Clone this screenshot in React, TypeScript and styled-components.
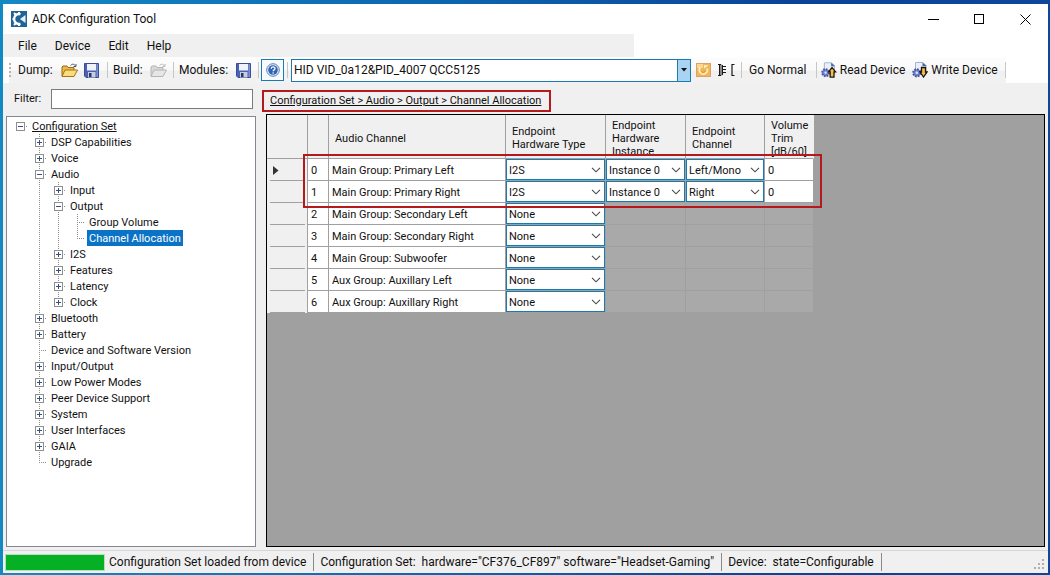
import React from 'react';
import styled, { createGlobalStyle, css } from 'styled-components';

const ui = 'Roboto, "Open Sans", sans-serif';
const classic = 'Roboto, "Liberation Sans", sans-serif';
const blue = '#1b7ab0';
const red = '#b3191d';

const Global = createGlobalStyle`
  *, *::before, *::after { box-sizing: border-box; }
  html, body { height: 100%; }
  body { margin: 0; background: #f0f0f0; color: #111; font: 11px/16px ${classic}; }
  #root { height: 100%; }
  button, input, select { font: inherit; color: inherit; margin: 0; padding: 0; border: 0; border-radius: 0; background: none; }
  a { color: inherit; }
`;

/* ---------- window frame ---------- */

const Desktop = styled.div`
  min-height: 100%;
  display: flex;
  padding: 4px 2px 2px 3px;
  background: linear-gradient(90deg, #1389c4 0%, #0d63ae 45%, #0b4496 75%, #0d469b 100%);
`;

const Window = styled.div`
  flex: 1;
  min-width: 0;
  display: flex;
  flex-direction: column;
  background: #f0f0f0;
`;

const TitleBar = styled.header`
  display: flex;
  align-items: center;
  height: 30px;
  padding-left: 8px;
  background: #fff;
  font: 12px/16px ${ui};
`;

const AppTitle = styled.h1`
  flex: 1;
  margin: 0 0 0 5px;
  font: inherit;
`;

const CaptionButton = styled.button`
  display: grid;
  place-items: center;
  width: 46px;
  height: 30px;
`;

const MenuBar = styled.nav`
  display: flex;
  align-items: center;
  height: 23px;
  padding-left: 9px;
  background: linear-gradient(90deg, #f0f0f0 631px, #fff 631px);
  font: 12px/16px ${ui};
`;

const MenuItem = styled.button`
  padding: 0 6px;
  margin-right: 6px;
`;

const ToolBar = styled.div`
  display: flex;
  align-items: center;
  height: 26px;
  padding-left: 6px;
  background: #fff;
  font: 12px/16px ${ui};
  white-space: nowrap;
`;

const ToolStrip = styled.div`
  display: flex;
  align-items: center;
  height: 26px;
  background: linear-gradient(#fdfdfd, #f9f9f9 50%, #f0f0f0 55%, #f2f2f2);
`;

const Grip = styled.span`
  width: 2px;
  height: 14px;
  margin-right: 7px;
  background: repeating-linear-gradient(#b4b4b4 0 2px, transparent 2px 4px);
`;

const ToolLabel = styled.span<{ $w: number }>`
  width: ${p => p.$w}px;
`;

const ToolButton = styled.button<{ $w?: number; $active?: boolean }>`
  display: flex;
  align-items: center;
  justify-content: center;
  gap: 3px;
  width: ${p => (p.$w ? `${p.$w}px` : 'auto')};
  height: 22px;
  ${p => p.$active && css`border: 1px solid ${blue}; background: #f7fafd;`}
`;

const Separator = styled.span<{ $l?: number; $r?: number }>`
  width: 1px;
  height: 16px;
  margin: 0 ${p => p.$r ?? 5}px 0 ${p => p.$l ?? 5}px;
  background: #c4c8cc;
`;

const DeviceCombo = styled.label`
  display: grid;
  grid-template-columns: 1fr 13px;
  width: 400px;
  height: 23px;
  margin: 0 3px;
  border: 1px solid ${blue};
  background: #fff;

  select {
    grid-area: 1 / 1 / 2 / 3;
    appearance: none;
    padding-left: 2px;
    outline: 0;
  }

  span {
    grid-area: 1 / 2 / 2 / 3;
    display: grid;
    place-items: center;
    border-left: 1px solid ${blue};
    background: #a9d3f3;
    pointer-events: none;
  }
`;

/* ---------- body ---------- */

const Body = styled.main`
  flex: 1;
  display: grid;
  grid-template-columns: 250px minmax(0, 1fr);
  grid-template-rows: 31px 1fr;
  column-gap: 10px;
  padding: 0 3px 3px;
`;

const FilterRow = styled.div`
  display: flex;
  align-items: center;
  padding: 1px 3px 0 8px;

  label { width: 37px; }

  input {
    flex: 1;
    min-width: 0;
    height: 20px;
    padding: 0 3px;
    border: 1px solid #7a7a7a;
    background: #fff;
  }
`;

const CrumbRow = styled.div`
  display: flex;
  align-items: center;
  padding-top: 4px;
  margin-left: -4px;
`;

const Crumbs = styled.nav`
  padding: 0 8px 0 6px;
  border: 2px solid ${red};
  line-height: 18px;
  white-space: nowrap;
`;

const TreePanel = styled.ul`
  margin: 2px 0 0;
  padding: 1px 4px;
  list-style: none;
  border: 1px solid #828790;
  background: #fff;
`;

const TreeRow = styled.li`
  display: flex;
  height: 16px;
`;

const dotsV = 'repeating-linear-gradient(#8c8c8c 0 1px, transparent 1px 2px)';
const dotsH = 'repeating-linear-gradient(90deg, #8c8c8c 0 1px, transparent 1px 2px)';

const Guide = styled.span<{ $line?: boolean }>`
  width: 19px;
  background: ${p => (p.$line ? `${dotsV} 9px 0 / 1px 100% no-repeat` : 'none')};
`;

const NodeCell = styled.span<{ $up: boolean; $down: boolean }>`
  display: flex;
  align-items: center;
  width: 19px;
  padding-left: 5px;
  background:
    ${p => (p.$up ? `${dotsV} 9px 0 / 1px 8px no-repeat,` : '')}
    ${p => (p.$down ? `${dotsV} 9px 8px / 1px 8px no-repeat,` : '')}
    ${dotsH} 9px 8px / 8px 1px no-repeat;
`;

const Toggle = styled.button<{ $open?: boolean }>`
  width: 9px;
  height: 9px;
  margin-top: 1px;
  border: 1px solid #8e8f8f;
  background:
    linear-gradient(#3b4f81, #3b4f81) center / 5px 1px no-repeat,
    ${p => (p.$open ? '' : 'linear-gradient(#3b4f81, #3b4f81) center / 1px 5px no-repeat,')}
    #fff;
`;

const NodeLabel = styled.button<{ $root?: boolean; $selected?: boolean }>`
  height: 16px;
  padding: 2px 2px 0;
  line-height: 14px;
  white-space: nowrap;
  text-decoration: ${p => (p.$root ? 'underline' : 'none')};
  ${p => p.$selected && css`background: #0b73c6; color: #fff;`}
`;

const GridPanel = styled.section`
  position: relative;
  border: 1px solid #000;
  background: #a0a0a0;
  overflow: hidden;
`;

const Table = styled.table`
  width: 547px;
  table-layout: fixed;
  border-collapse: separate;
  border-spacing: 0;
  line-height: 13px;
`;

const HeadCell = styled.th`
  height: 44px;
  padding: 3px 0 0 6px;
  border-right: 1px solid #a0a0a0;
  border-bottom: 1px solid #a0a0a0;
  background: #f0f0f0;
  font-weight: normal;
  text-align: left;

  &:last-child { border-right-color: #f0f0f0; }

  div { max-height: 39px; overflow: hidden; }
`;

const RowHead = styled.th`
  height: 22px;
  padding: 0 0 0 6px;
  border-right: 1px solid #a0a0a0;
  background: linear-gradient(#a0a0a0, #a0a0a0) 3px 100% / 35px 1px no-repeat #f0f0f0;
  text-align: left;

  svg { display: block; }
`;

const Cell = styled.td<{ $kind?: 'combo' | 'off' }>`
  height: 22px;
  padding: ${p => (p.$kind === 'combo' ? '0' : '1px 0 0 3px')};
  border-right: 1px solid #a0a0a0;
  border-bottom: 1px solid #a0a0a0;
  background: ${p => (p.$kind === 'off' ? '#a9a9a9' : '#fff')};
`;

const Combo = styled.label`
  display: grid;
  align-items: center;
  height: 21px;
  border: 1px solid ${blue};

  select {
    grid-area: 1 / 1;
    width: 100%;
    height: 19px;
    padding: 1px 0 0 2px;
    appearance: none;
    outline: 0;
  }

  svg {
    grid-area: 1 / 1;
    justify-self: end;
    margin-right: 3px;
    pointer-events: none;
  }
`;

const RowMarker = styled.div`
  position: absolute;
  left: 36px;
  top: 39px;
  width: 519px;
  height: 54px;
  border: 2px solid ${red};
  pointer-events: none;
`;

/* ---------- status bar ---------- */

const StatusBar = styled.footer`
  display: flex;
  align-items: center;
  height: 23px;
  padding-left: 2px;
  border-top: 1px solid #d7d7d7;
  font: 12px/16px ${ui};
  white-space: pre;
`;

const Progress = styled.div`
  width: 100px;
  height: 17px;
  margin-right: 4px;
  border: 1px solid #bcdcc0;
  background: #06b025;
`;

const StatusText = styled.span`
  padding-right: 7px;
  margin-right: 6px;
  border-right: 1px solid #8a8a8a;
  line-height: 18px;
`;

const SizeGrip = styled.svg`
  margin: 5px 3px 0 auto;
`;

/* ---------- icons ---------- */

const LogoIcon = () => (
  <svg width="16" height="16" viewBox="0 0 16 16">
    <rect width="16" height="16" fill="#1f6497" />
    <path d="M9.500 3.200A5 5 0 1 0 9.500 12.800" fill="none" stroke="#fff" strokeWidth="2.400" />
    <path d="M3 2l2 2M1.500 8h2M3 14l2-2M8 1v2M8 13v2" stroke="#fff" strokeWidth="2" />
    <path d="M9 8l5.500-4v8z" fill="#e8f2fa" />
  </svg>
);

const FolderIcon = ({ off }: { off?: boolean }) => (
  <svg width="17" height="15" viewBox="0 0 17 15">
    <path d="M1 13V4l1-1h4l1 1.500h6V7" fill={off ? '#d9d9d9' : '#e9b949'} stroke={off ? '#b5b5b5' : '#9a6b12'} />
    <path d="M1 13.500L4 7h12.500L13 13.500z" fill={off ? '#e6e6e6' : '#fbdc7c'} stroke={off ? '#b5b5b5' : '#a47516'} />
    <path d="M9.500 2.500c2-2 4-1.500 5 .5M15 1v2.500h-2.500" fill="none" stroke={off ? '#bcbcbc' : '#4e5a66'} />
  </svg>
);

const SaveIcon = () => (
  <svg width="15" height="15" viewBox="0 0 15 15">
    <path d="M1 .5h13.500v14H2L.5 13V.5z" fill="#4a62b5" stroke="#3b4c94" />
    <rect x="3" y="1" width="9" height="6.500" fill="#eef2fb" />
    <path d="M12.500 1h1.500v13h-1.500z" fill="#7f93d8" />
    <rect x="4" y="9" width="7.500" height="5.500" fill="#c9cedb" />
    <rect x="5" y="10" width="2.500" height="4" fill="#27356f" />
  </svg>
);

const HelpIcon = () => (
  <svg width="14" height="14" viewBox="0 0 14 14">
    <circle cx="7" cy="7" r="6.300" fill="#e4edf8" stroke="#5b7fb5" />
    <circle cx="7" cy="7" r="4.800" fill="#2e63b4" />
    <path d="M5.200 5.700C5.200 3.300 9 3.300 9 5.500 9 6.900 7.100 6.800 7.100 8.300" fill="none" stroke="#fff" strokeWidth="1.300" />
    <circle cx="7.100" cy="10" r=".8" fill="#fff" />
  </svg>
);

const RefreshIcon = () => (
  <svg width="15" height="14" viewBox="0 0 15 14">
    <rect x=".5" y=".5" width="14" height="13" fill="#f3b654" stroke="#dba267" />
    <path d="M1 1h6v4H1z" fill="#f9d896" />
    <path d="M4.200 4.500A4 4 0 1 0 11 5.500" fill="none" stroke="#fff0c8" strokeWidth="1.600" />
    <path d="M8 5.500V2l4.500.5z" fill="#fff0c8" />
    <path d="M5.500 8.500c1.500 1.500 3 1 4-1" stroke="#e28f2c" fill="none" />
  </svg>
);

const PlugIcon = () => (
  <svg width="17" height="12" viewBox="0 0 17 12">
    <path d="M0 .5h3v11H0M1.500 .5v11M4.500 1v10M5 2.500h3M5 5.500h3M5 8.500h3" fill="none" stroke="#1a1a1a" />
    <path d="M16.500.5h-2.500v11h2.500" fill="none" stroke="#1a1a1a" strokeWidth="1.200" />
  </svg>
);

const DeviceIcon = ({ down }: { down?: boolean }) => (
  <svg width="16" height="16" viewBox="0 0 16 16">
    <path d="M3.500.5h7.500l3 3V12H3.500z" fill="#eaf0fa" stroke="#a3b4d0" />
    <path d="M10.500.5v3.500h4z" fill="#3c64b0" />
    <circle cx="4.800" cy="10.800" r="3.600" fill="#7484d0" stroke="#4653a0" strokeWidth="2" strokeDasharray="1.700 1.100" />
    <circle cx="4.800" cy="10.800" r="1.200" fill="#dfe4fa" />
    {down
      ? <path d="M9.500 5.500h4v4.500H15l-3.500 5-3.500-5h1.500z" fill="#f0be55" stroke="#1d1405" strokeWidth="1.300" />
      : <path d="M11.500 5.500l3.700 4.500h-1.700v5.300h-4V10H7.800z" fill="#f0be55" stroke="#1d1405" strokeWidth="1.300" />}
  </svg>
);

const Chevron = () => (
  <svg width="10" height="6" viewBox="0 0 10 6">
    <path d="M1 .8l4 4 4-4" fill="none" stroke="#4a4a4a" strokeWidth="1.100" />
  </svg>
);

/* ---------- data ---------- */

type Node = { label: string; open?: boolean; leaf?: boolean; selected?: boolean; children?: Node[] };

const tree: Node = {
  label: 'Configuration Set',
  open: true,
  children: [
    { label: 'DSP Capabilities' },
    { label: 'Voice' },
    {
      label: 'Audio',
      open: true,
      children: [
        { label: 'Input' },
        {
          label: 'Output',
          open: true,
          children: [
            { label: 'Group Volume', leaf: true },
            { label: 'Channel Allocation', leaf: true, selected: true },
          ],
        },
        { label: 'I2S' },
        { label: 'Features' },
        { label: 'Latency' },
        { label: 'Clock' },
      ],
    },
    { label: 'Bluetooth' },
    { label: 'Battery' },
    { label: 'Device and Software Version', leaf: true },
    { label: 'Input/Output' },
    { label: 'Low Power Modes' },
    { label: 'Peer Device Support' },
    { label: 'System' },
    { label: 'User Interfaces' },
    { label: 'GAIA' },
    { label: 'Upgrade', leaf: true },
  ],
};

const columns = [
  { width: 41, lines: [] },
  { width: 21, lines: [] },
  { width: 177, lines: ['Audio Channel'] },
  { width: 100, lines: ['Endpoint', 'Hardware Type'] },
  { width: 80, lines: ['Endpoint', 'Hardware', 'Instance'] },
  { width: 79, lines: ['Endpoint', 'Channel'] },
  { width: 49, lines: ['Volume', 'Trim', '[dB/60]'] },
];

const channels = [
  { name: 'Main Group: Primary Left', type: 'I2S', instance: 'Instance 0', channel: 'Left/Mono', trim: '0' },
  { name: 'Main Group: Primary Right', type: 'I2S', instance: 'Instance 0', channel: 'Right', trim: '0' },
  { name: 'Main Group: Secondary Left', type: 'None' },
  { name: 'Main Group: Secondary Right', type: 'None' },
  { name: 'Main Group: Subwoofer', type: 'None' },
  { name: 'Aux Group: Auxillary Left', type: 'None' },
  { name: 'Aux Group: Auxillary Right', type: 'None' },
];

function TreeNodes({ node, lines, last, root }: { node: Node; lines: boolean[]; last: boolean; root?: boolean }) {
  const kids = node.children ?? [];
  return (
    <>
      <TreeRow>
        {lines.map((line, i) => <Guide key={i} $line={line} />)}
        <NodeCell $up={!root} $down={!root && !last}>
          {!node.leaf && <Toggle $open={node.open} aria-label={`Toggle ${node.label}`} />}
        </NodeCell>
        <NodeLabel $root={root} $selected={node.selected}>{node.label}</NodeLabel>
      </TreeRow>
      {kids.map((kid, i) => (
        <TreeNodes key={kid.label} node={kid} lines={[...lines, !root && !last]} last={i === kids.length - 1} />
      ))}
    </>
  );
}

function ComboCell({ value, label }: { value?: string; label: string }) {
  if (!value) return <Cell $kind="off" />;
  return (
    <Cell $kind="combo">
      <Combo>
        <select aria-label={label} defaultValue={value}>
          <option>{value}</option>
        </select>
        <Chevron />
      </Combo>
    </Cell>
  );
}

export default function App() {
  return (
    <Desktop>
      <Global />
      <Window>
        <TitleBar>
          <LogoIcon />
          <AppTitle>ADK Configuration Tool</AppTitle>
          <CaptionButton aria-label="Minimize">
            <svg width="11" height="11"><path d="M0 5.500h11" stroke="#000" /></svg>
          </CaptionButton>
          <CaptionButton aria-label="Maximize">
            <svg width="11" height="11"><rect x=".5" y=".5" width="9" height="9" fill="none" stroke="#000" /></svg>
          </CaptionButton>
          <CaptionButton aria-label="Close">
            <svg width="11" height="11"><path d="M.5.5l10 10M10.500.5l-10 10" stroke="#000" /></svg>
          </CaptionButton>
        </TitleBar>

        <MenuBar>
          {['File', 'Device', 'Edit', 'Help'].map(m => <MenuItem key={m}>{m}</MenuItem>)}
        </MenuBar>

        <ToolBar>
          <ToolStrip>
            <Grip />
            <ToolLabel $w={40}>Dump:</ToolLabel>
            <ToolButton $w={22} aria-label="Open dump"><FolderIcon /></ToolButton>
            <ToolButton $w={23} aria-label="Save dump"><SaveIcon /></ToolButton>
            <Separator $l={4} />
            <ToolLabel $w={34}>Build:</ToolLabel>
            <ToolButton $w={22} aria-label="Open build"><FolderIcon off /></ToolButton>
            <Separator $l={4} />
            <ToolLabel $w={53}>Modules:</ToolLabel>
            <ToolButton $w={23} aria-label="Save modules"><SaveIcon /></ToolButton>
            <Separator $l={3} $r={2} />
            <ToolButton $w={23} $active aria-label="Help"><HelpIcon /></ToolButton>
            <Separator $l={3} $r={0} />
            <DeviceCombo>
              <select aria-label="Device" defaultValue="qcc">
                <option value="qcc">HID VID_0a12&amp;PID_4007 QCC5125</option>
              </select>
              <span><svg width="6" height="4"><path d="M0 0h6L3 3.500z" fill="#111" /></svg></span>
            </DeviceCombo>
            <ToolButton $w={19} aria-label="Refresh"><RefreshIcon /></ToolButton>
            <ToolButton $w={27} aria-label="Connect"><PlugIcon /></ToolButton>
            <Separator $l={1} $r={7} />
            <ToolButton>Go Normal</ToolButton>
            <Separator $l={10} $r={4} />
            <ToolButton $w={84}><DeviceIcon />Read Device</ToolButton>
            <ToolButton $w={99}><DeviceIcon down />Write Device</ToolButton>
            <Separator $l={1} $r={0} />
          </ToolStrip>
        </ToolBar>

        <Body>
          <FilterRow>
            <label htmlFor="filter">Filter:</label>
            <input id="filter" type="text" />
          </FilterRow>
          <CrumbRow>
            <Crumbs aria-label="Breadcrumb">
              <a href="#channel-allocation">Configuration Set &gt; Audio &gt; Output &gt; Channel Allocation</a>
            </Crumbs>
          </CrumbRow>
          <TreePanel>
            <TreeNodes node={tree} lines={[]} last root />
          </TreePanel>
          <GridPanel>
            <Table>
              <colgroup>
                {columns.map((c, i) => <col key={i} style={{ width: c.width }} />)}
              </colgroup>
              <thead>
                <tr>
                  {columns.map((c, i) => (
                    <HeadCell key={i} scope="col">
                      <div>{c.lines.map((l, j) => <React.Fragment key={l}>{j > 0 && <br />}{l}</React.Fragment>)}</div>
                    </HeadCell>
                  ))}
                </tr>
              </thead>
              <tbody>
                {channels.map((c, i) => (
                  <tr key={c.name}>
                    <RowHead scope="row">
                      {i === 0 && <svg width="6" height="9"><path d="M0 0l5.500 4.500L0 9z" fill="#333" /></svg>}
                    </RowHead>
                    <Cell>{i}</Cell>
                    <Cell>{c.name}</Cell>
                    <ComboCell value={c.type} label={`${c.name} hardware type`} />
                    <ComboCell value={c.instance} label={`${c.name} hardware instance`} />
                    <ComboCell value={c.channel} label={`${c.name} endpoint channel`} />
                    <Cell $kind={c.trim ? undefined : 'off'}>{c.trim}</Cell>
                  </tr>
                ))}
              </tbody>
            </Table>
            <RowMarker />
          </GridPanel>
        </Body>

        <StatusBar>
          <Progress role="progressbar" aria-label="Load progress" aria-valuenow={100} />
          <StatusText>Configuration Set loaded from device</StatusText>
          <StatusText>{'Configuration Set:  hardware="CF376_CF897" software="Headset-Gaming"'}</StatusText>
          <StatusText>{'Device:  state=Configurable'}</StatusText>
          <SizeGrip width="11" height="11" viewBox="0 0 11 11">
            <path d="M8 0h2v2H8zM4 4h2v2H4zM8 4h2v2H8zM0 8h2v2H0zM4 8h2v2H4zM8 8h2v2H8z" fill="#b0b0b0" />
          </SizeGrip>
        </StatusBar>
      </Window>
    </Desktop>
  );
}
